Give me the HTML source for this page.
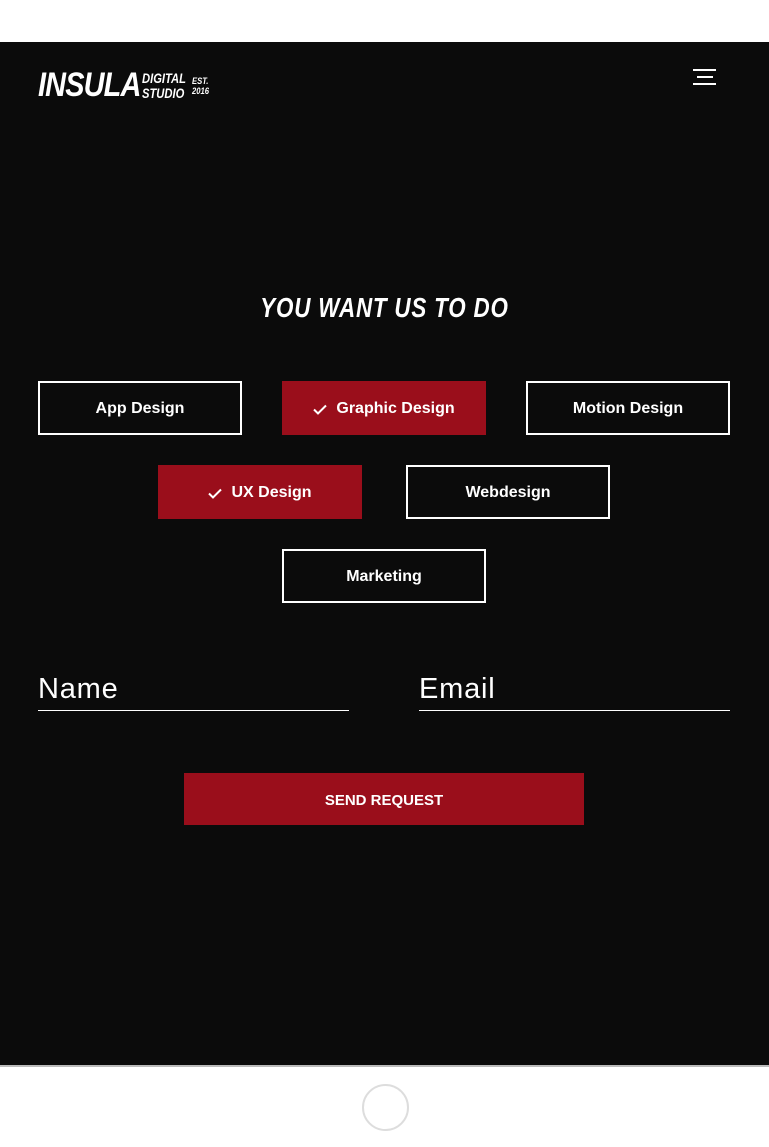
<!DOCTYPE html>
<html><head><meta charset="utf-8"><style>
*{margin:0;padding:0;box-sizing:border-box}
body{width:769px;height:1147px;background:#fff;font-family:"Liberation Sans",sans-serif;position:relative;overflow:hidden}
.dark{position:absolute;left:0;top:42px;width:769px;height:1023px;background:#0b0b0b}
.line{position:absolute;left:0;top:1065px;width:769px;height:2px;background:#bbb}
.circle{position:absolute;left:362px;top:1084px;width:47px;height:47px;border:2px solid #ddd;border-radius:50%}
.logo{position:absolute;left:38px;top:68px;color:#fff;font-weight:900;font-style:italic}
.logo .big{position:absolute;left:0;top:0;font-size:34px;letter-spacing:-1px;transform:scaleX(0.85);transform-origin:left;line-height:34px}
.logo .sm{position:absolute;left:104px;top:3px;font-size:14px;line-height:15px;transform:scaleX(0.8);transform-origin:left}
.logo .xs{position:absolute;left:154px;top:8px;font-size:9px;line-height:10px;transform:scaleX(0.85);transform-origin:left}
.hb{position:absolute;background:#fff;height:2px}
h2{position:absolute;left:0;width:769px;top:292px;text-align:center;color:#fff;font-size:28px;font-weight:900;font-style:italic;letter-spacing:1px;transform:scaleX(0.8)}
.btn{position:absolute;width:204px;height:54px;border:2px solid #fff;color:#fff;font-weight:700;font-size:16px;display:flex;align-items:center;justify-content:center;padding-top:2px}
.btn.on{background:#9a0e1b;border-color:#9a0e1b}
.btn svg{margin-right:9px}
.f{position:absolute;top:668px;width:311px;height:43px;border-bottom:1px solid #fff;color:#fff;font-size:29px;letter-spacing:.8px;padding-top:5px;font-weight:300}
.send{position:absolute;left:184px;top:773px;width:400px;height:52px;background:#9a0e1b;color:#fff;font-weight:700;font-size:15px;display:flex;align-items:center;justify-content:center;padding-top:2px}
</style></head><body>
<div class="dark"></div>
<div class="line"></div>
<div class="circle"></div>
<div class="logo"><div class="big">INSULA</div><div class="sm">DIGITAL<br>STUDIO</div><div class="xs">EST.<br>2016</div></div>
<div class="hb" style="left:693px;top:69px;width:23px"></div>
<div class="hb" style="left:697px;top:76px;width:16px"></div>
<div class="hb" style="left:693px;top:83px;width:23px"></div>
<h2>YOU WANT US TO DO</h2>
<div class="btn" style="left:38px;top:381px">App Design</div>
<div class="btn on" style="left:282px;top:381px"><svg width="14" height="11" viewBox="0 0 14 11"><path d="M1 5.5L5 9.5L13 1.5" stroke="#fff" stroke-width="2" fill="none"/></svg>Graphic Design</div>
<div class="btn" style="left:526px;top:381px">Motion Design</div>
<div class="btn on" style="left:158px;top:465px"><svg width="14" height="11" viewBox="0 0 14 11"><path d="M1 5.5L5 9.5L13 1.5" stroke="#fff" stroke-width="2" fill="none"/></svg>UX Design</div>
<div class="btn" style="left:406px;top:465px">Webdesign</div>
<div class="btn" style="left:282px;top:549px">Marketing</div>
<div class="f" style="left:38px">Name</div>
<div class="f" style="left:419px">Email</div>
<div class="send">SEND REQUEST</div>
</body></html>
